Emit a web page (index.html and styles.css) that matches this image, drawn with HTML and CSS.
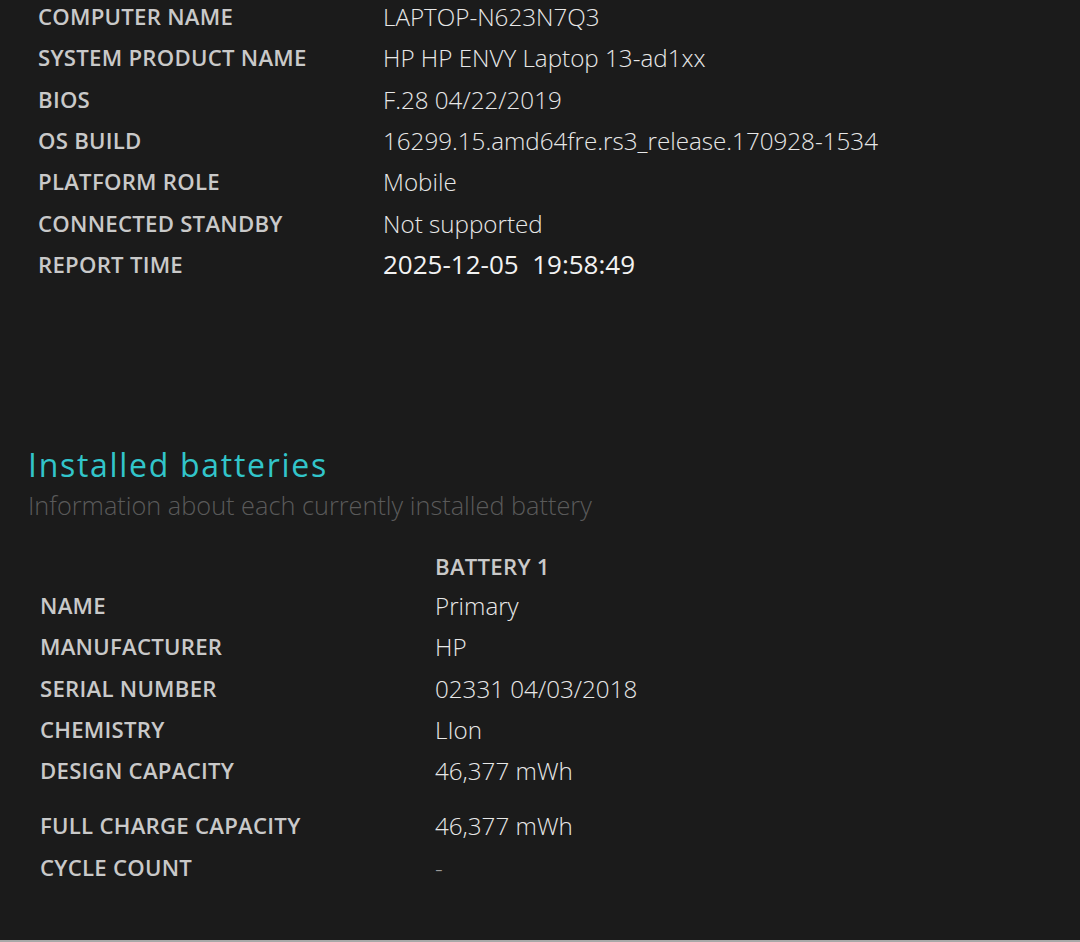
FILE: index.html
```html
<!DOCTYPE html>
<html>
<head>
<meta charset="utf-8">
<link rel="stylesheet" href="styles.css">
</head>
<body>
<div class="page">
  <section class="sysinfo">
    <div class="row"><span class="label">COMPUTER NAME</span><span class="value">LAPTOP-N623N7Q3</span></div>
    <div class="row"><span class="label">SYSTEM PRODUCT NAME</span><span class="value">HP HP ENVY Laptop 13-ad1xx</span></div>
    <div class="row"><span class="label">BIOS</span><span class="value">F.28 04/22/2019</span></div>
    <div class="row"><span class="label">OS BUILD</span><span class="value">16299.15.amd64fre.rs3_release.170928-1534</span></div>
    <div class="row"><span class="label">PLATFORM ROLE</span><span class="value">Mobile</span></div>
    <div class="row"><span class="label">CONNECTED STANDBY</span><span class="value">Not supported</span></div>
    <div class="row"><span class="label">REPORT TIME</span><span class="value strong">2025-12-05&nbsp;&nbsp;19:58:49</span></div>
  </section>

  <section class="batteries">
    <h2 class="title">Installed batteries</h2>
    <p class="subtitle">Information about each currently installed battery</p>
    <div class="btable">
      <div class="brow head"><span class="label"></span><span class="label">BATTERY 1</span></div>
      <div class="brow"><span class="label">NAME</span><span class="value">Primary</span></div>
      <div class="brow"><span class="label">MANUFACTURER</span><span class="value">HP</span></div>
      <div class="brow"><span class="label">SERIAL NUMBER</span><span class="value">02331 04/03/2018</span></div>
      <div class="brow"><span class="label">CHEMISTRY</span><span class="value">LIon</span></div>
      <div class="brow"><span class="label">DESIGN CAPACITY</span><span class="value">46,377 mWh</span></div>
      <div class="brow spaced"><span class="label">FULL CHARGE CAPACITY</span><span class="value">46,377 mWh</span></div>
      <div class="brow"><span class="label">CYCLE COUNT</span><span class="value dim">-</span></div>
    </div>
  </section>
</div>
<div class="bottom-line"></div>
</body>
</html>
```

FILE: styles.css
```css
html, body {
  margin: 0;
  padding: 0;
  background: #1b1b1b;
  height: 942px;
  overflow: hidden;
}
body {
  font-family: "Open Sans", "Noto Sans", sans-serif;
  color: #e6e6e6;
  position: relative;
}
.page {
  height: 940px;
}
.sysinfo {
  padding: 0 0 0 38px;
}
.row {
  display: grid;
  grid-template-columns: 345px 1fr;
  height: 41.3px;
  align-items: center;
}
.label {
  font-weight: 600;
  font-size: 22.2px;
  color: #c9c9c9;
  letter-spacing: 0.25px;
}
.value {
  font-weight: 300;
  font-size: 24.2px;
  color: #e8e8e8;
}
.value.strong {
  font-weight: 500;
  font-size: 26px;
  color: #f2f2f2;
}
.value.dim {
  color: #9a9a9a;
}
.sysinfo .row:first-child {
  margin-top: -4px;
}
.batteries {
  padding: 160px 0 0 28px;
}
.title {
  margin: 0;
  font-weight: 400;
  font-size: 32px;
  letter-spacing: 1.7px;
  color: #32c5ca;
  line-height: 40px;
}
.subtitle {
  margin: 0;
  font-weight: 300;
  font-size: 25.3px;
  color: #5a5a5a;
  line-height: 40px;
}
.btable {
  margin-top: 22px;
  padding-left: 12px;
}
.brow {
  display: grid;
  grid-template-columns: 395px 1fr;
  height: 41.25px;
  align-items: center;
}
.brow.head {
  height: 38px;
}
.brow.spaced {
  margin-top: 14px;
}
.bottom-line {
  position: absolute;
  left: 0;
  right: 0;
  bottom: 0;
  height: 2px;
  background: #a8a8a8;
}
```
